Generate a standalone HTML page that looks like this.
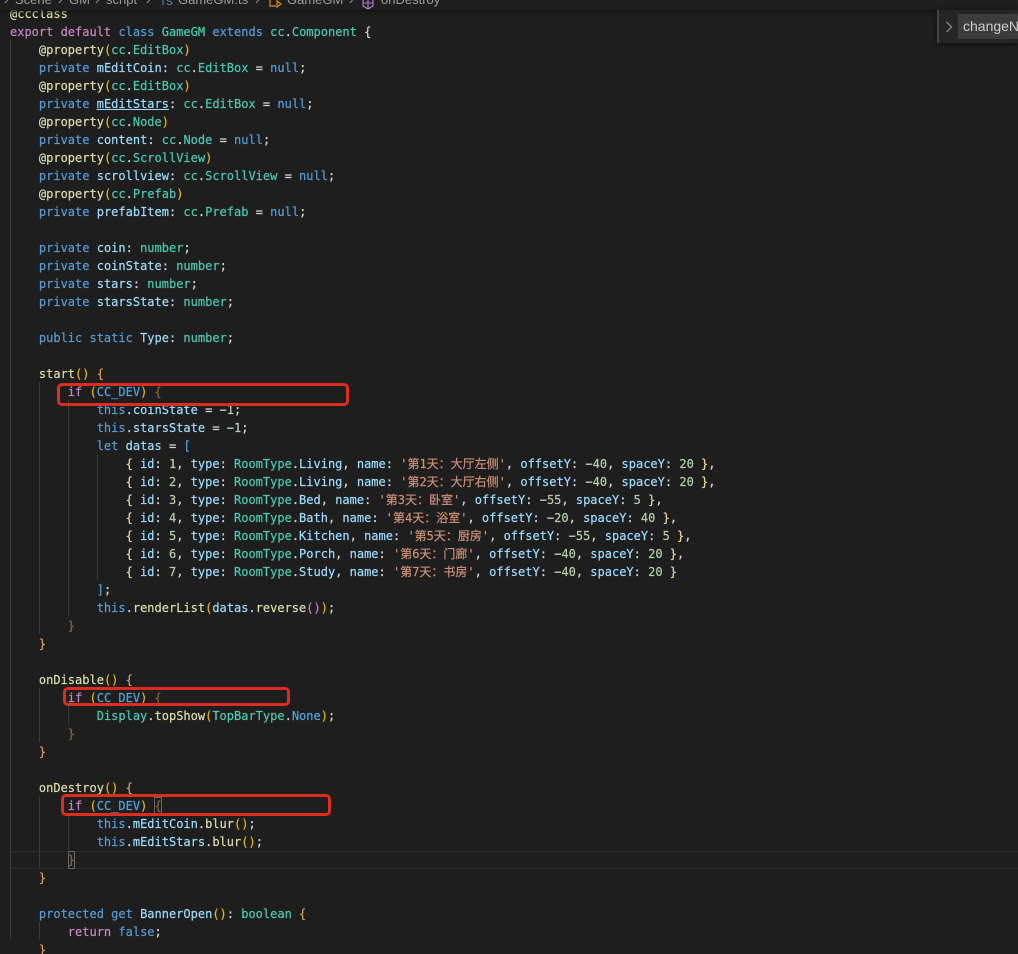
<!DOCTYPE html>
<html><head><meta charset="utf-8">
<style>
html,body{margin:0;padding:0;background:#1e1e1e}
#r{position:relative;width:1018px;height:954px;overflow:hidden;background:#1e1e1e}
#c{position:absolute;left:0;top:0;width:1018px;height:954px;font:12px/18px "DejaVu Sans Mono","Noto Sans CJK SC",monospace;color:#d4d4d4;filter:blur(.3px)}
#t{position:absolute;left:0;top:1px;width:1018px;height:954px;-webkit-text-stroke:.2px}
.l{position:absolute;left:10px;white-space:pre;height:18px}
.k{color:#c586c0}.b{color:#569cd6}.v{color:#9cdcfe}.t{color:#4ec9b0}.f{color:#dcdcaa}.n{color:#b5cea8}.s{color:#ce9178}
.y{color:#e6b422}.o{color:#d4a06a}.w{color:#8f6535}.e{color:#e8d8a0}.u{color:#4fa6e0}
.g{position:absolute;width:1px;background:#3c3c3c}
.rb{position:absolute;border:3px solid #dd2c20;border-radius:5px;box-sizing:border-box}
#top{position:absolute;left:0;top:0;width:1018px;height:10px;background:#1e1e1e;box-shadow:0 1px 5px #0b0b0b;overflow:hidden;font:13px/13px "Liberation Sans",sans-serif;color:#9d9d9d}
#top span{position:absolute;top:-7px;white-space:pre}
#find{position:absolute;left:937px;top:10px;width:81px;height:33px;background:#252526;box-shadow:0 1px 5px #0e0e0e}
#find i{position:absolute;left:0;top:0;width:2px;height:33px;background:#454545}
#find b{position:absolute;left:21px;top:4px;width:60px;height:25px;background:#3c3c3c;font:normal 14px/25px "Liberation Sans",sans-serif;color:#cccccc;padding-left:5px;box-sizing:border-box;white-space:nowrap;overflow:hidden}
</style></head><body><div id="r">
<div id="c">
<div class="g" style="left:10px;top:40px;height:900px"></div>
<div class="g" style="left:39px;top:382px;height:252px"></div>
<div class="g" style="left:68px;top:400px;height:216px"></div>
<div class="g" style="left:97px;top:454px;height:126px"></div>
<div class="g" style="left:39px;top:688px;height:54px"></div>
<div class="g" style="left:68px;top:706px;height:18px"></div>
<div class="g" style="left:39px;top:796px;height:72px"></div>
<div class="g" style="left:68px;top:814px;height:36px"></div>
<div class="g" style="left:39px;top:922px;height:18px"></div>
<div style="position:absolute;left:11px;top:851px;width:1007px;height:18px;border-top:1px solid #2a2a2a;border-bottom:1px solid #2a2a2a;box-sizing:border-box"></div>
<div style="position:absolute;left:154px;top:797px;width:8px;height:17px;border:1px solid #666;box-sizing:border-box"></div>
<div style="position:absolute;left:68px;top:851px;width:7px;height:18px;border:1px solid #666;box-sizing:border-box"></div>
<div id="t">
<div class="l" style="top:4px"><span class="f">@ccclass</span></div>
<div class="l" style="top:22px"><span class="k">export default</span> <span class="b">class</span> <span class="t">GameGM</span> <span class="b">extends</span> <span class="t">cc</span>.<span class="t">Component</span> <span class="e">{</span></div>
<div class="l" style="top:40px">    <span class="f">@property</span><span class="y">(</span><span class="t">cc</span>.<span class="t">EditBox</span><span class="y">)</span></div>
<div class="l" style="top:58px">    <span class="b">private</span> <span class="v">mEditCoin</span>: <span class="t">cc</span>.<span class="t">EditBox</span> = <span class="b">null</span>;</div>
<div class="l" style="top:76px">    <span class="f">@property</span><span class="y">(</span><span class="t">cc</span>.<span class="t">EditBox</span><span class="y">)</span></div>
<div class="l" style="top:94px">    <span class="b">private</span> <span class="v" style="text-decoration:underline">mEditStars</span>: <span class="t">cc</span>.<span class="t">EditBox</span> = <span class="b">null</span>;</div>
<div class="l" style="top:112px">    <span class="f">@property</span><span class="y">(</span><span class="t">cc</span>.<span class="t">Node</span><span class="y">)</span></div>
<div class="l" style="top:130px">    <span class="b">private</span> <span class="v">content</span>: <span class="t">cc</span>.<span class="t">Node</span> = <span class="b">null</span>;</div>
<div class="l" style="top:148px">    <span class="f">@property</span><span class="y">(</span><span class="t">cc</span>.<span class="t">ScrollView</span><span class="y">)</span></div>
<div class="l" style="top:166px">    <span class="b">private</span> <span class="v">scrollview</span>: <span class="t">cc</span>.<span class="t">ScrollView</span> = <span class="b">null</span>;</div>
<div class="l" style="top:184px">    <span class="f">@property</span><span class="y">(</span><span class="t">cc</span>.<span class="t">Prefab</span><span class="y">)</span></div>
<div class="l" style="top:202px">    <span class="b">private</span> <span class="v">prefabItem</span>: <span class="t">cc</span>.<span class="t">Prefab</span> = <span class="b">null</span>;</div>
<div class="l" style="top:238px">    <span class="b">private</span> <span class="v">coin</span>: <span class="t">number</span>;</div>
<div class="l" style="top:256px">    <span class="b">private</span> <span class="v">coinState</span>: <span class="t">number</span>;</div>
<div class="l" style="top:274px">    <span class="b">private</span> <span class="v">stars</span>: <span class="t">number</span>;</div>
<div class="l" style="top:292px">    <span class="b">private</span> <span class="v">starsState</span>: <span class="t">number</span>;</div>
<div class="l" style="top:328px">    <span class="b">public static</span> <span class="v">Type</span>: <span class="t">number</span>;</div>
<div class="l" style="top:364px">    <span class="f">start</span><span class="y">()</span> <span class="o">{</span></div>
<div class="l" style="top:382px">        <span class="k">if</span> <span class="y">(</span><span class="u">CC_DEV</span><span class="y">)</span> <span class="w">{</span></div>
<div class="l" style="top:400px">            <span class="b">this</span>.<span class="v">coinState</span> = −<span class="n">1</span>;</div>
<div class="l" style="top:418px">            <span class="b">this</span>.<span class="v">starsState</span> = −<span class="n">1</span>;</div>
<div class="l" style="top:436px">            <span class="b">let</span> <span class="v">datas</span> = <span class="u">[</span></div>
<div class="l" style="top:454px">                <span class="e">{</span> <span class="v">id</span>: <span class="n">1</span>, <span class="v">type</span>: <span class="t">RoomType</span>.<span class="v">Living</span>, <span class="v">name</span>: <span class="s">'第1天：大厅左侧'</span>, <span class="v">offsetY</span>: −<span class="n">40</span>, <span class="v">spaceY</span>: <span class="n">20</span> <span class="e">}</span>,</div>
<div class="l" style="top:472px">                <span class="e">{</span> <span class="v">id</span>: <span class="n">2</span>, <span class="v">type</span>: <span class="t">RoomType</span>.<span class="v">Living</span>, <span class="v">name</span>: <span class="s">'第2天：大厅右侧'</span>, <span class="v">offsetY</span>: −<span class="n">40</span>, <span class="v">spaceY</span>: <span class="n">20</span> <span class="e">}</span>,</div>
<div class="l" style="top:490px">                <span class="e">{</span> <span class="v">id</span>: <span class="n">3</span>, <span class="v">type</span>: <span class="t">RoomType</span>.<span class="v">Bed</span>, <span class="v">name</span>: <span class="s">'第3天：卧室'</span>, <span class="v">offsetY</span>: −<span class="n">55</span>, <span class="v">spaceY</span>: <span class="n">5</span> <span class="e">}</span>,</div>
<div class="l" style="top:508px">                <span class="e">{</span> <span class="v">id</span>: <span class="n">4</span>, <span class="v">type</span>: <span class="t">RoomType</span>.<span class="v">Bath</span>, <span class="v">name</span>: <span class="s">'第4天：浴室'</span>, <span class="v">offsetY</span>: −<span class="n">20</span>, <span class="v">spaceY</span>: <span class="n">40</span> <span class="e">}</span>,</div>
<div class="l" style="top:526px">                <span class="e">{</span> <span class="v">id</span>: <span class="n">5</span>, <span class="v">type</span>: <span class="t">RoomType</span>.<span class="v">Kitchen</span>, <span class="v">name</span>: <span class="s">'第5天：厨房'</span>, <span class="v">offsetY</span>: −<span class="n">55</span>, <span class="v">spaceY</span>: <span class="n">5</span> <span class="e">}</span>,</div>
<div class="l" style="top:544px">                <span class="e">{</span> <span class="v">id</span>: <span class="n">6</span>, <span class="v">type</span>: <span class="t">RoomType</span>.<span class="v">Porch</span>, <span class="v">name</span>: <span class="s">'第6天：门廊'</span>, <span class="v">offsetY</span>: −<span class="n">40</span>, <span class="v">spaceY</span>: <span class="n">20</span> <span class="e">}</span>,</div>
<div class="l" style="top:562px">                <span class="e">{</span> <span class="v">id</span>: <span class="n">7</span>, <span class="v">type</span>: <span class="t">RoomType</span>.<span class="v">Study</span>, <span class="v">name</span>: <span class="s">'第7天：书房'</span>, <span class="v">offsetY</span>: −<span class="n">40</span>, <span class="v">spaceY</span>: <span class="n">20</span> <span class="e">}</span></div>
<div class="l" style="top:580px">            <span class="u">]</span>;</div>
<div class="l" style="top:598px">            <span class="b">this</span>.<span class="f">renderList</span><span class="y">(</span><span class="v">datas</span>.<span class="f">reverse</span><span class="k">()</span><span class="y">)</span>;</div>
<div class="l" style="top:616px">        <span class="w">}</span></div>
<div class="l" style="top:634px">    <span class="o">}</span></div>
<div class="l" style="top:670px">    <span class="f">onDisable</span><span class="y">()</span> <span class="o">{</span></div>
<div class="l" style="top:688px">        <span class="k">if</span> <span class="y">(</span><span class="u">CC_DEV</span><span class="y">)</span> <span class="w">{</span></div>
<div class="l" style="top:706px">            <span class="t">Display</span>.<span class="f">topShow</span><span class="y">(</span><span class="t">TopBarType</span>.<span class="u">None</span><span class="y">)</span>;</div>
<div class="l" style="top:724px">        <span class="w">}</span></div>
<div class="l" style="top:742px">    <span class="o">}</span></div>
<div class="l" style="top:778px">    <span class="f">onDestroy</span><span class="y">()</span> <span class="o">{</span></div>
<div class="l" style="top:796px">        <span class="k">if</span> <span class="y">(</span><span class="u">CC_DEV</span><span class="y">)</span> <span class="w">{</span></div>
<div class="l" style="top:814px">            <span class="b">this</span>.<span class="v">mEditCoin</span>.<span class="f">blur</span><span class="y">()</span>;</div>
<div class="l" style="top:832px">            <span class="b">this</span>.<span class="v">mEditStars</span>.<span class="f">blur</span><span class="y">()</span>;</div>
<div class="l" style="top:850px">        <span class="w">}</span></div>
<div class="l" style="top:868px">    <span class="o">}</span></div>
<div class="l" style="top:904px">    <span class="b">protected get</span> <span class="v">BannerOpen</span><span class="y">()</span>: <span class="t">boolean</span> <span class="o">{</span></div>
<div class="l" style="top:922px">        <span class="k">return</span> <span class="b">false</span>;</div>
<div class="l" style="top:940px">    <span class="o">}</span></div>
</div>
</div>

<div class="rb" style="left:57px;top:383px;width:292px;height:23px"></div>
<div class="rb" style="left:63px;top:687px;width:227px;height:19px"></div>
<div class="rb" style="left:61px;top:794px;width:270px;height:22px"></div>

<div id="top">
<span style="left:4px">›</span><span style="left:15px">Scene</span><span style="left:58px">›</span><span style="left:69px">GM</span><span style="left:95px">›</span><span style="left:106px">script</span><span style="left:146px">›</span>
<span style="left:160px;color:#4a9cd6;font-size:10px;top:-4px">TS</span><span style="left:178px">GameGM.ts</span><span style="left:255px">›</span>
<svg style="position:absolute;left:269px;top:-4px" width="14" height="14" viewBox="0 0 14 14"><path d="M1 1h7v4M1 1v9h6M8 5l4 3-4 3z" fill="none" stroke="#d98a20" stroke-width="1.2"/></svg>
<span style="left:287px">GameGM</span><span style="left:349px">›</span>
<svg style="position:absolute;left:361px;top:-4px" width="14" height="14" viewBox="0 0 14 14"><path d="M7 1l5 3v6l-5 3-5-3V4zM7 1v12M2 7h10" fill="none" stroke="#b180d7" stroke-width="1.1"/></svg>
<span style="left:381px">onDestroy</span>
</div>

<div id="find"><i></i>
<svg style="position:absolute;left:8px;top:11px" width="9" height="12" viewBox="0 0 9 12"><path d="M1.5 1l5 5-5 5" fill="none" stroke="#9a9a9a" stroke-width="1.1"/></svg>
<b>changeN</b></div>
</div></body></html>
